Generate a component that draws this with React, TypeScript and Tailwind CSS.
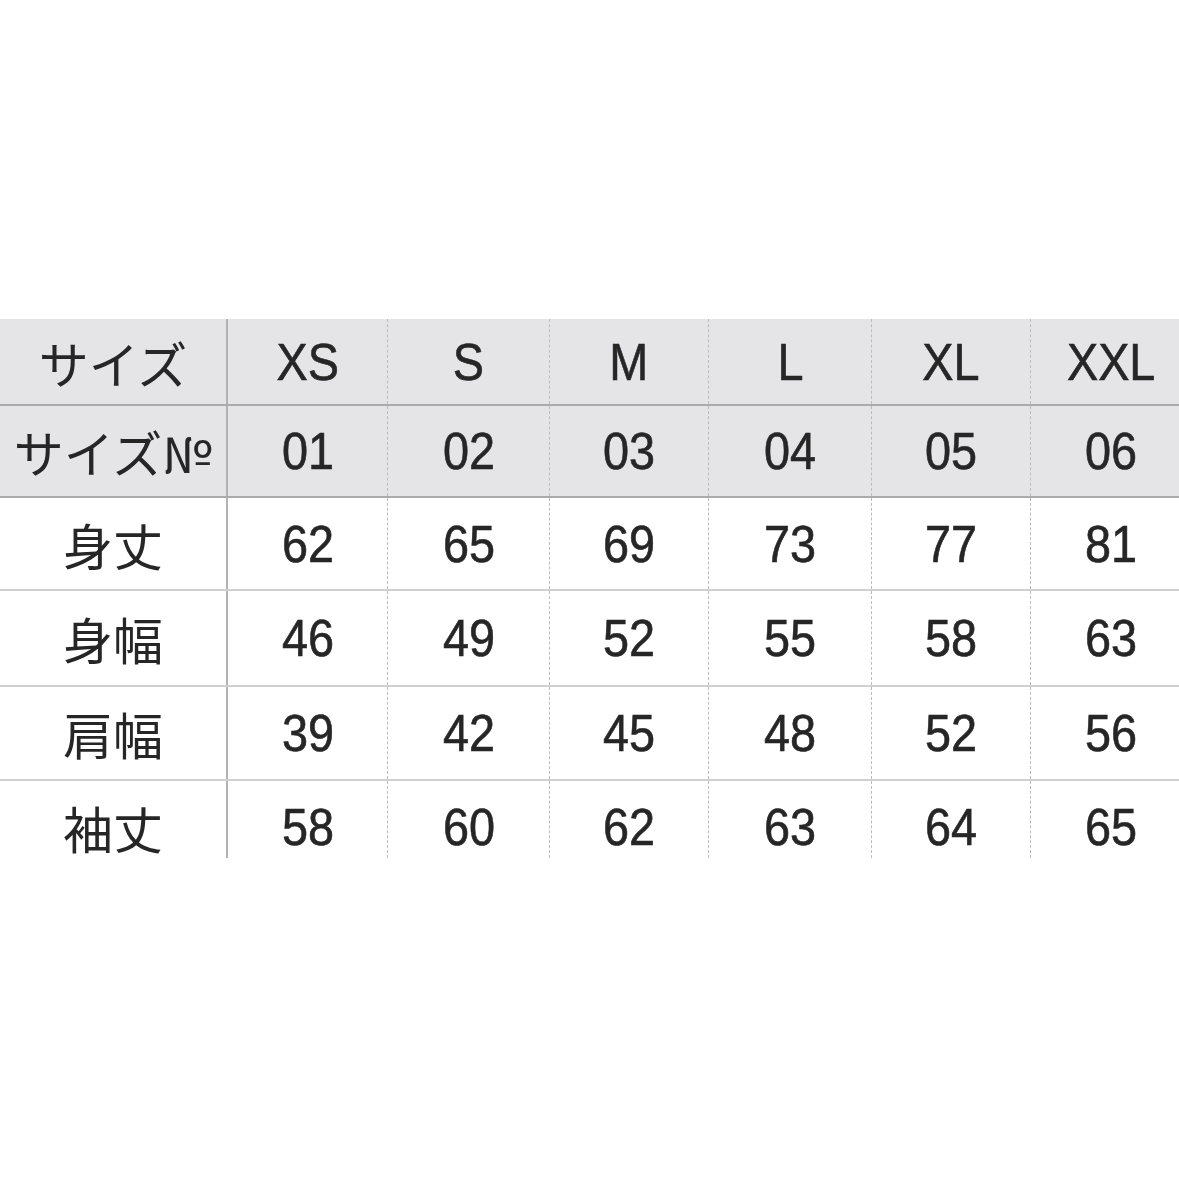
const columns = ["XS", "S", "M", "L", "XL", "XXL"];

const rows: { label: string; values: string[]; head?: boolean; h: string; pad?: string }[] = [
  { label: "サイズ", values: columns, head: true, h: "h-[87px]" },
  { label: "サイズ№", values: ["01", "02", "03", "04", "05", "06"], head: true, h: "h-[92px]" },
  { label: "身丈", values: ["62", "65", "69", "73", "77", "81"], h: "h-[93px]" },
  { label: "身幅", values: ["46", "49", "52", "55", "58", "63"], h: "h-[96px]" },
  { label: "肩幅", values: ["39", "42", "45", "48", "52", "56"], h: "h-[94px]" },
  // last row is cut off at the bottom in the source, so text sits low
  { label: "袖丈", values: ["58", "60", "62", "63", "64", "65"], h: "h-[77px]", pad: "pt-[15px]" },
];

export default function App() {
  return (
    <div className="w-[1179px] h-[1179px] bg-white overflow-hidden pt-[319px] text-[#262626] font-['Liberation_Sans','Noto_Sans_CJK_JP',sans-serif]">
      <div className="w-[1179px] overflow-x-clip">
        <div className="grid grid-cols-[228px_160px_162px_159px_163px_159px_160px] w-[1191px]">
          {rows.map((row, r) => {
            const last = r === rows.length - 1;
            const rowLine = last
              ? ""
              : row.head
                ? "border-b-2 border-b-[#ababab]"
                : "border-b-2 border-b-[#d0d0d0]";
            const bg = row.head ? "bg-[#e5e5e7]" : "bg-white";
            const pad = row.pad ?? "";
            return (
              <div key={r} className="contents">
                <div className={`${row.h} ${rowLine} ${bg}`}>
                  <div className={`h-full flex items-center justify-center border-r-2 border-[#b2b2b2] ${pad}`}>
                    <span className="text-[50px] leading-none font-['Noto_Sans_CJK_JP',sans-serif]">
                      {row.label}
                    </span>
                  </div>
                </div>
                {row.values.map((v, c) => (
                  <div key={c} className={`${row.h} ${rowLine} ${bg}`}>
                    <div
                      className={`h-full flex items-center justify-center ${pad} ${
                        c < 5 ? "border-r border-dashed border-[#bcbcbc]" : ""
                      }`}
                    >
                      <span className="text-[52px] leading-none scale-x-90 inline-block [-webkit-text-stroke:0.6px_#262626]">
                        {v}
                      </span>
                    </div>
                  </div>
                ))}
              </div>
            );
          })}
        </div>
      </div>
    </div>
  );
}
